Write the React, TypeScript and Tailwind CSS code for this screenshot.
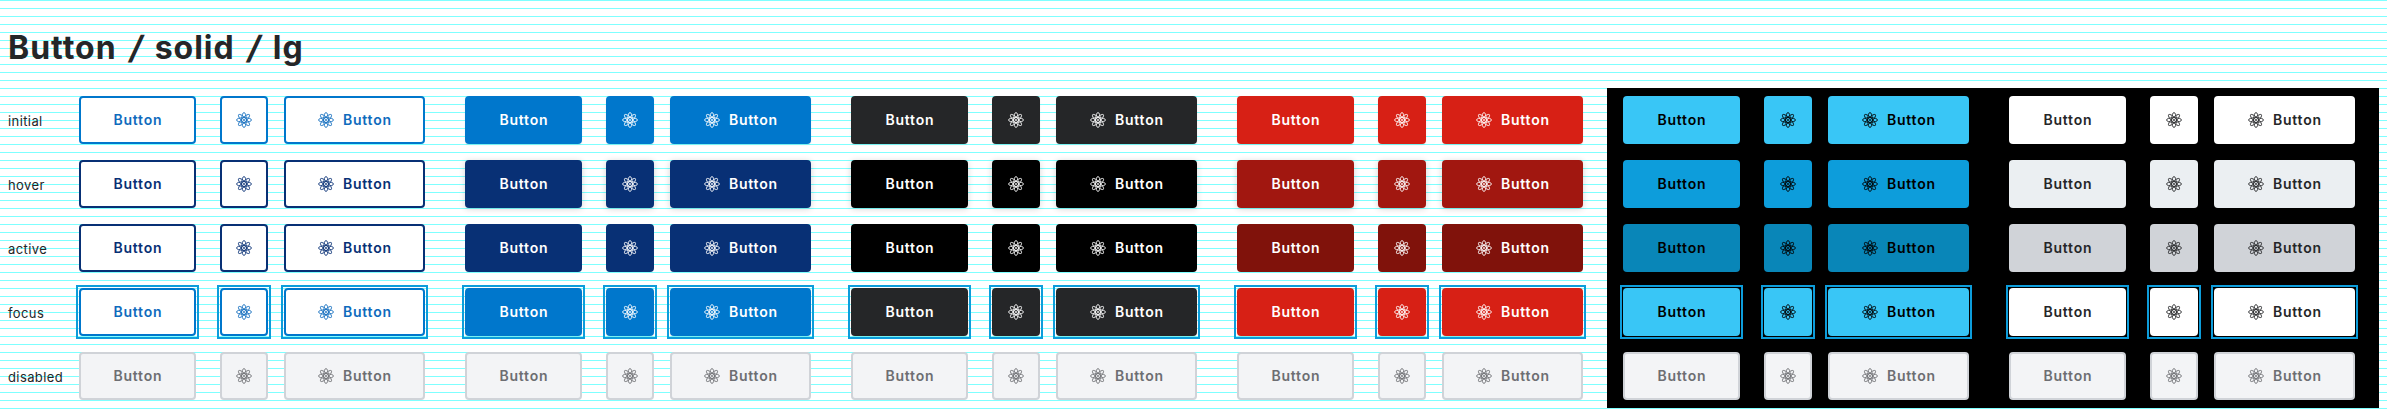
type Theme = {
  label: string;
  dark?: boolean;
  states: [string, string, string];
};

const rows = ['initial', 'hover', 'active', 'focus', 'disabled'] as const;

const themes: Theme[] = [
  {
    label: 'outline',
    states: [
      'bg-white border-2 border-[#0077cc] text-[#0f6bbd]',
      'bg-white border-2 border-[#083075] text-[#083075]',
      'bg-white border-2 border-[#083075] text-[#083075]',
    ],
  },
  {
    label: 'primary',
    states: [
      'bg-[#0077cc] text-white shadow-[0_1px_2px_rgba(0,0,0,0.08)]',
      'bg-[#083075] text-white shadow-[0_1px_6px_rgba(0,0,0,0.16)]',
      'bg-[#083075] text-white',
    ],
  },
  {
    label: 'neutral',
    states: [
      'bg-[#252628] text-white shadow-[0_1px_2px_rgba(0,0,0,0.08)]',
      'bg-black text-white shadow-[0_1px_6px_rgba(0,0,0,0.16)]',
      'bg-black text-white',
    ],
  },
  {
    label: 'danger',
    states: [
      'bg-[#d72015] text-white shadow-[0_1px_2px_rgba(0,0,0,0.08)]',
      'bg-[#a11710] text-white shadow-[0_1px_6px_rgba(0,0,0,0.16)]',
      'bg-[#80120b] text-white',
    ],
  },
  {
    label: 'primary-dark',
    dark: true,
    states: ['bg-[#39c6f6] text-black', 'bg-[#0d9ddb] text-black', 'bg-[#0986b8] text-black'],
  },
  {
    label: 'neutral-dark',
    dark: true,
    states: ['bg-white text-[#252628]', 'bg-[#ebeff2] text-[#252628]', 'bg-[#d0d3d8] text-[#252628]'],
  },
];

function Atom() {
  return (
    <svg width="16" height="16" viewBox="0 0 16 16" fill="none" stroke="currentColor" strokeWidth="0.85" className="shrink-0">
      <ellipse cx="8" cy="8" rx="7.55" ry="2.3" />
      <ellipse cx="8" cy="8" rx="2.3" ry="7.55" />
      <ellipse cx="8" cy="8" rx="7.55" ry="2.3" transform="rotate(45 8 8)" />
      <ellipse cx="8" cy="8" rx="7.55" ry="2.3" transform="rotate(-45 8 8)" />
      <circle cx="8" cy="8" r="0.9" fill="currentColor" stroke="none" />
    </svg>
  );
}

type ButtonProps = { look: string; size: string; focused: boolean; icon?: boolean; text?: boolean };

function Button({ look, size, focused, icon, text }: ButtonProps) {
  return (
    <div className={`flex shrink-0 ${focused ? 'outline-2 outline-offset-1 outline-[#0d9ddb]' : ''}`}>
      <button
        className={`flex h-12 shrink-0 items-center justify-center gap-[9px] rounded-[4px] text-[14px] leading-4 font-semibold tracking-[0.8px] ${size} ${look}`}
      >
        {icon && <Atom />}
        {text && <span className="-mr-[0.8px]">Button</span>}
      </button>
    </div>
  );
}

function Cell({ theme, row }: { theme: Theme; row: number }) {
  const disabled = 'bg-[#f3f4f6] border-2 border-[#d0d3d8] text-[#6d6e72]';
  const focused = row === 3;
  const look = row === 4 ? disabled : focused ? theme.states[0] : theme.states[row];
  return (
    <div className={`flex h-16 w-[386px] shrink-0 items-center pl-4 ${theme.dark ? 'bg-black' : ''}`}>
      <Button look={look} size="w-[117px]" focused={focused} text />
      <div className="mr-4 ml-6 flex">
        <Button look={look} size="w-12" focused={focused} icon />
      </div>
      <Button look={look} size="w-[141px]" focused={focused} icon text />
    </div>
  );
}

function Slash() {
  return <span className="inline-block w-[38px] -skew-x-[11deg] pr-[3px] text-center tracking-normal">/</span>;
}

export default function App() {
  return (
    <main className="h-[416px] w-[2387px] overflow-hidden bg-white bg-[linear-gradient(#7fffff_1px,transparent_1px)] bg-[length:8px_8px] font-['Inter',sans-serif] text-[#252628]">
      <h1 className="flex h-[88px] pt-7 pl-2 text-[32px] leading-10 font-bold tracking-[1px] whitespace-nowrap">
        Button
        <Slash />
        solid
        <Slash />
        lg
      </h1>
      {rows.map((name, row) => (
        <div key={name} className="flex h-16 items-center">
          <div className="w-[63px] shrink-0 pt-px pl-2 text-[13px] leading-4 tracking-[0.4px]">{name}</div>
          {themes.map((theme) => (
            <Cell key={theme.label} theme={theme} row={row} />
          ))}
        </div>
      ))}
    </main>
  );
}
